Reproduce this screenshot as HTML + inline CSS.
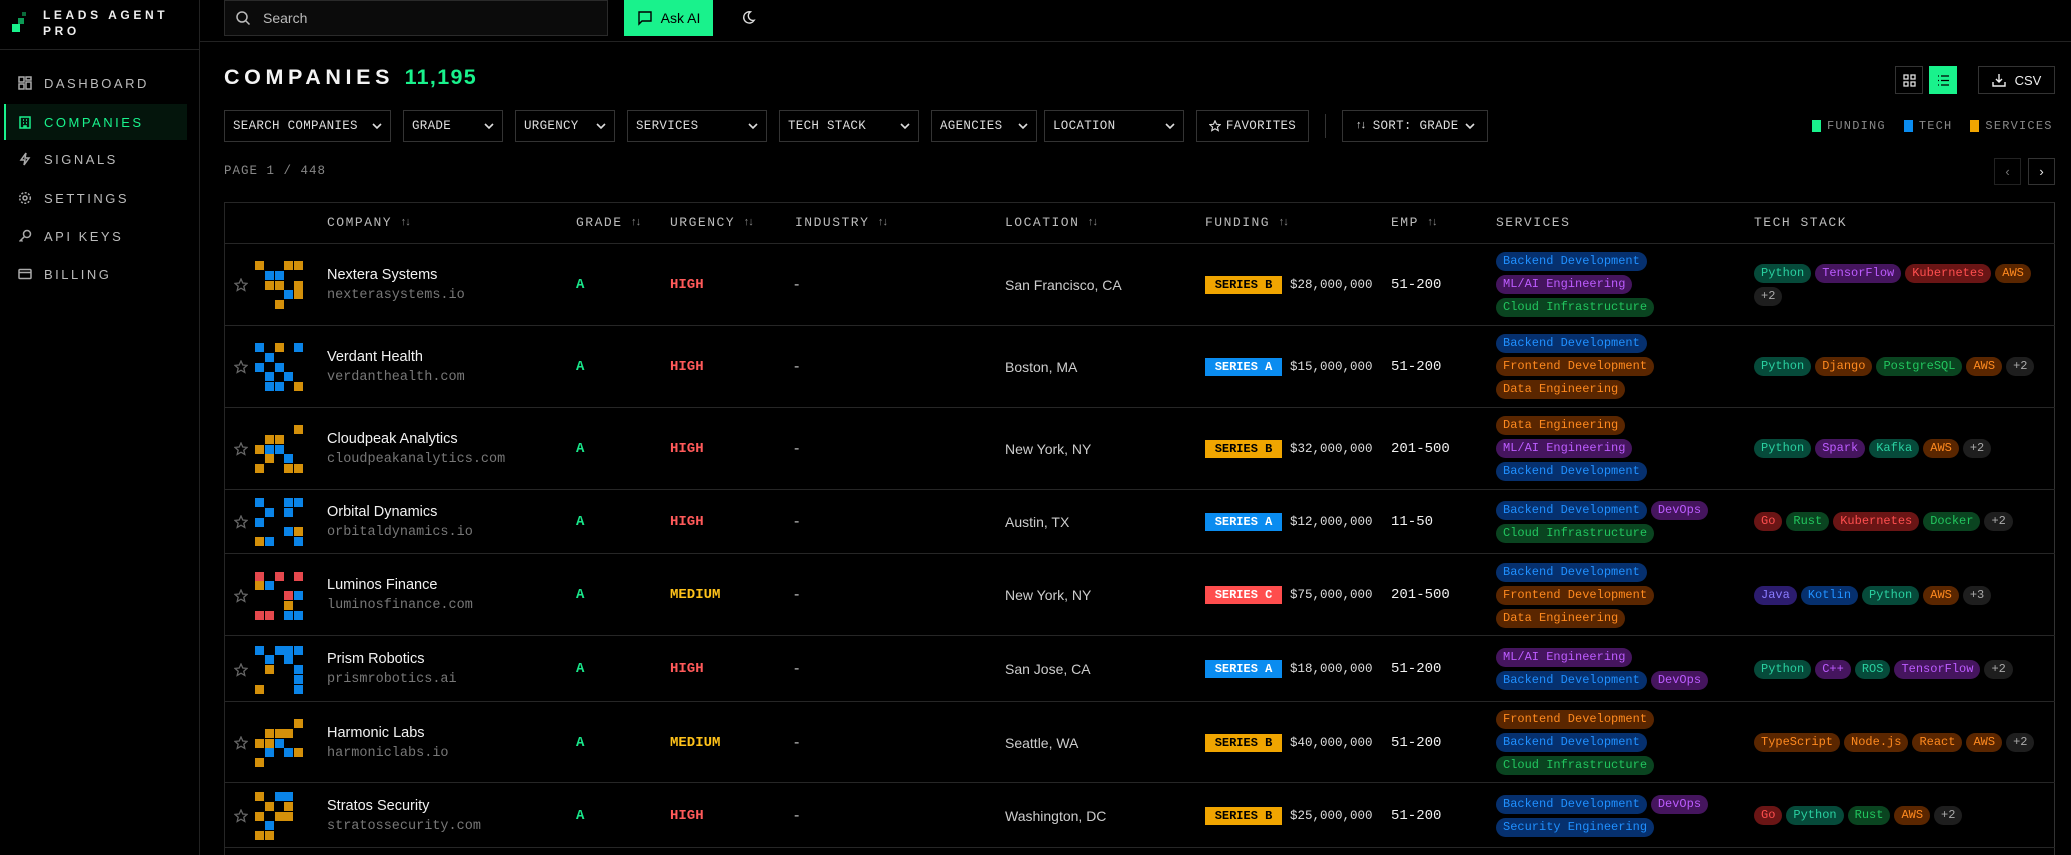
<!DOCTYPE html>
<html><head><meta charset="utf-8"><style>
*{box-sizing:border-box;margin:0;padding:0}
html,body{width:2071px;height:855px;overflow:hidden;background:#000}
body{color:#eee;font-family:"Liberation Sans",sans-serif}
#wrap{position:relative;width:2071px;height:855px;overflow:hidden}
.a{position:absolute}
.mono{font-family:"Liberation Mono",monospace}
.side{left:0;top:0;width:200px;height:855px;border-right:1px solid #222}
.nav{position:absolute;left:4px;width:183px;height:36px;display:flex;align-items:center;padding-left:14px;font-size:13px;letter-spacing:2.5px;color:#bbb}
.nav svg{width:14px;height:14px;margin-right:12px;stroke:#aaa;fill:none;stroke-width:1.5}
.nav.act{background:#04150c;color:#19f28c;border-left:2px solid #19f28c;padding-left:12px}
.nav.act svg{stroke:#19f28c}
.filt{position:absolute;top:110px;height:32px;border:1px solid #333;display:flex;align-items:center;justify-content:space-between;padding:0 8px;font-family:"Liberation Mono",monospace;font-size:12.5px;color:#ddd;letter-spacing:.3px}
.chev{width:10px;height:10px;stroke:#ddd;fill:none;stroke-width:1.6}
.th{position:absolute;top:202px;height:41px;display:flex;align-items:center;font-family:"Liberation Mono",monospace;font-size:13px;letter-spacing:1.5px;color:#bbb}
.th .s{font-size:11px;margin-left:8px;letter-spacing:-2px;color:#888}
.row{position:absolute;left:224px;width:1831px;border-bottom:1px solid #262626}
.c{position:absolute;top:0;height:100%;display:flex;align-items:center}
.logo{position:absolute;left:31px;width:48px;height:48px}
.logo i{position:absolute;width:9px;height:9px}
.nm{font-size:14.5px;color:#f2f2f2}
.dm{font-family:"Liberation Mono",monospace;font-size:13.5px;color:#777;margin-top:5px}
.gr{font-family:"Liberation Mono",monospace;font-weight:bold;font-size:14px;color:#19e68a}
.hi{font-family:"Liberation Mono",monospace;font-weight:bold;font-size:14px;color:#ff5a5a}
.me{font-family:"Liberation Mono",monospace;font-weight:bold;font-size:14px;color:#ffc21a}
.loc{font-size:14px;color:#ccc}
.fb{font-family:"Liberation Mono",monospace;font-weight:bold;font-size:12px;height:18px;line-height:18px;padding:0 6px;width:77px;text-align:center}
.amt{font-family:"Liberation Mono",monospace;font-size:12.5px;color:#ddd;margin-left:8px}
.emp{font-family:"Liberation Mono",monospace;font-size:14px;color:#f0f0f0}
.pills{display:flex;flex-wrap:wrap;gap:4px 4px;align-content:center}
.p{font-family:"Liberation Mono",monospace;font-size:12px;height:19px;line-height:19px;padding:0 7px;border-radius:10px;white-space:nowrap}
.bl{background:#06306e;color:#2090ff}
.or{background:#5a2600;color:#ff8a1f}
.pu{background:#45155e;color:#bd5cff}
.gn{background:#0a4420;color:#22c55e}
.tl{background:#064a3a;color:#2ad0a0}
.rd{background:#6a1515;color:#ff4f4f}
.in{background:#2c1c6e;color:#8a7cff}
.gy{background:#1e1e1e;color:#aaa}
.star{position:absolute;left:10px;width:14px;height:14px;fill:none;stroke:#666;stroke-width:1.3}
</style></head><body><div id="wrap">

<div class="a side">
  <div class="a" style="left:0;top:49px;width:199px;height:1px;background:#222"></div>
  <div class="a" style="left:12px;top:24px;width:8px;height:8px;background:#19f28c"></div>
  <div class="a" style="left:18px;top:18px;width:6px;height:6px;background:#0c9a55"></div>
  <div class="a" style="left:22px;top:12px;width:4px;height:4px;background:#0a6a3a"></div>
  <div class="a" style="left:43px;top:7px;font-size:12px;font-weight:bold;letter-spacing:3.6px;line-height:16px;color:#eee">LEADS AGENT<br>PRO</div>
  <div class="nav" style="top:65px"><svg viewBox="0 0 14 14"><rect x="1" y="1" width="5" height="5"/><rect x="8" y="1" width="5" height="3"/><rect x="1" y="8" width="5" height="5"/><rect x="8" y="6" width="5" height="7"/></svg>DASHBOARD</div>
  <div class="nav act" style="top:104px"><svg viewBox="0 0 14 14"><rect x="2" y="2" width="10" height="11"/><path d="M5 5h1M8 5h1M5 8h1M8 8h1M6 13v-2h2v2"/></svg>COMPANIES</div>
  <div class="nav" style="top:141px"><svg viewBox="0 0 14 14"><path d="M8 1L3 8h4l-1 5 5-7H7z"/></svg>SIGNALS</div>
  <div class="nav" style="top:180px"><svg viewBox="0 0 14 14"><circle cx="7" cy="7" r="2"/><circle cx="7" cy="7" r="5.3" stroke-dasharray="2 1.5"/></svg>SETTINGS</div>
  <div class="nav" style="top:218px"><svg viewBox="0 0 14 14"><circle cx="9" cy="5" r="3.5"/><path d="M6.5 7.5L1.5 12.5M3 11l1.5 1.5"/></svg>API KEYS</div>
  <div class="nav" style="top:256px"><svg viewBox="0 0 14 14"><rect x="1" y="2.5" width="12" height="9" rx="1"/><path d="M1 5.5h12"/></svg>BILLING</div>
</div>

<div class="a" style="left:200px;top:41px;width:1871px;height:1px;background:#222"></div>
<div class="a" style="left:224px;top:0;width:384px;height:36px;border:1px solid #2a2a2a;background:#0b0b0b;display:flex;align-items:center;padding-left:10px;font-size:14px;color:#bbb">
<svg width="16" height="16" viewBox="0 0 16 16" fill="none" stroke="#bbb" stroke-width="1.5" style="margin-right:12px"><circle cx="7" cy="7" r="5"/><path d="M11 11l3.5 3.5"/></svg>Search</div>
<div class="a" style="left:624px;top:0;width:89px;height:36px;background:#19f28c;display:flex;align-items:center;justify-content:center;font-size:14px;color:#000">
<svg width="16" height="16" viewBox="0 0 16 16" fill="none" stroke="#000" stroke-width="1.4" style="margin-right:8px"><path d="M2 2h12v9H5l-3 3z"/></svg>Ask AI</div>
<svg class="a" style="left:741px;top:10px" width="15" height="15" viewBox="0 0 16 16" fill="none" stroke="#ddd" stroke-width="1.5"><path d="M10 2a6 6 0 1 0 4 9A5 5 0 0 1 10 2z"/></svg>

<div class="a" style="left:224px;top:65px;font-size:21.5px;font-weight:bold;letter-spacing:4.6px;color:#f4f4f4">COMPANIES <span style="color:#19f28c;letter-spacing:1.3px">11,195</span></div>

<div class="a" style="left:1895px;top:66px;width:28px;height:28px;border:1px solid #333;display:flex;align-items:center;justify-content:center"><svg width="13" height="13" viewBox="0 0 13 13" fill="none" stroke="#ddd" stroke-width="1.3"><rect x="1" y="1" width="4" height="4"/><rect x="8" y="1" width="4" height="4"/><rect x="1" y="8" width="4" height="4"/><rect x="8" y="8" width="4" height="4"/></svg></div>
<div class="a" style="left:1929px;top:66px;width:28px;height:28px;background:#19f28c;display:flex;align-items:center;justify-content:center"><svg width="13" height="13" viewBox="0 0 13 13" fill="none" stroke="#000" stroke-width="1.3"><path d="M4 2h8M4 6.5h8M4 11h8M1 2h1M1 6.5h1M1 11h1"/></svg></div>
<div class="a" style="left:1978px;top:66px;width:77px;height:28px;border:1px solid #333;display:flex;align-items:center;justify-content:center;font-size:13px;color:#eee"><svg width="14" height="14" viewBox="0 0 14 14" fill="none" stroke="#eee" stroke-width="1.4" style="margin-right:9px"><path d="M7 1v8M4 6l3 3 3-3M1 9v4h12V9"/></svg>CSV</div>

<div class="filt" style="left:224px;width:167px">SEARCH COMPANIES<svg class="chev" viewBox="0 0 10 10"><path d="M1 3l4 4 4-4"/></svg></div>
<div class="filt" style="left:403px;width:100px">GRADE<svg class="chev" viewBox="0 0 10 10"><path d="M1 3l4 4 4-4"/></svg></div>
<div class="filt" style="left:515px;width:100px">URGENCY<svg class="chev" viewBox="0 0 10 10"><path d="M1 3l4 4 4-4"/></svg></div>
<div class="filt" style="left:627px;width:140px">SERVICES<svg class="chev" viewBox="0 0 10 10"><path d="M1 3l4 4 4-4"/></svg></div>
<div class="filt" style="left:779px;width:140px">TECH STACK<svg class="chev" viewBox="0 0 10 10"><path d="M1 3l4 4 4-4"/></svg></div>
<div class="filt" style="left:931px;width:106px">AGENCIES<svg class="chev" viewBox="0 0 10 10"><path d="M1 3l4 4 4-4"/></svg></div>
<div class="filt" style="left:1044px;width:140px">LOCATION<svg class="chev" viewBox="0 0 10 10"><path d="M1 3l4 4 4-4"/></svg></div>
<div class="filt" style="left:1196px;width:113px;justify-content:center"><svg width="12" height="12" viewBox="0 0 14 14" fill="none" stroke="#ddd" stroke-width="1.3" style="margin-right:5px"><path d="M7 1l1.8 4 4.2.4-3.2 2.8 1 4.2L7 10.2 3.2 12.4l1-4.2L1 5.4l4.2-.4z"/></svg>FAVORITES</div>
<div class="a" style="left:1325px;top:114px;width:1px;height:24px;background:#333"></div>
<div class="filt" style="left:1342px;width:146px;justify-content:center"><span style="font-size:11px;letter-spacing:-2px;margin-right:8px">↑↓</span>SORT: GRADE<svg class="chev" viewBox="0 0 10 10" style="margin-left:6px"><path d="M1 3l4 4 4-4"/></svg></div>

<div class="a mono" style="left:1812px;top:119px;font-size:12px;color:#888;display:flex;align-items:center;letter-spacing:1.2px">
<span style="width:9px;height:12px;background:#19f28c;margin-right:6px"></span>FUNDING
<span style="width:9px;height:12px;background:#0a8cf0;margin:0 6px 0 18px"></span>TECH
<span style="width:9px;height:12px;background:#f0a500;margin:0 6px 0 18px"></span>SERVICES</div>

<div class="a mono" style="left:224px;top:164px;font-size:12.5px;color:#888;letter-spacing:1px">PAGE 1 / 448</div>
<div class="a" style="left:1994px;top:158px;width:27px;height:27px;border:1px solid #222;color:#777;text-align:center;line-height:25px;font-size:13px">‹</div>
<div class="a" style="left:2028px;top:158px;width:27px;height:27px;border:1px solid #333;color:#eee;text-align:center;line-height:25px;font-size:13px">›</div>

<div class="a" style="left:224px;top:202px;width:1831px;height:653px;border:1px solid #262626;border-bottom:none;border-right:1px solid #333"></div>
<div class="a" style="left:224px;top:243px;width:1831px;height:1px;background:#262626"></div>
<div class="th" style="left:327px">COMPANY<span class="s">↑↓</span></div>
<div class="th" style="left:576px">GRADE<span class="s">↑↓</span></div>
<div class="th" style="left:670px">URGENCY<span class="s">↑↓</span></div>
<div class="th" style="left:795px">INDUSTRY<span class="s">↑↓</span></div>
<div class="th" style="left:1005px">LOCATION<span class="s">↑↓</span></div>
<div class="th" style="left:1205px">FUNDING<span class="s">↑↓</span></div>
<div class="th" style="left:1391px">EMP<span class="s">↑↓</span></div>
<div class="th" style="left:1496px">SERVICES</div>
<div class="th" style="left:1754px">TECH STACK</div>

<div id="rows"></div>
</div>
<script>
const O='#d4900a',B='#0a84e8',R='#e5484d';
const rows=[
{t:244,h:82,n:'Nextera Systems',d:'nexterasystems.io',u:'hi',U:'HIGH',l:'San Francisco, CA',f:'B',a:'$28,000,000',e:'51-200',
 g:[[0,0,O],[0,3,O],[0,4,O],[1,1,B],[1,2,B],[2,1,O],[2,2,O],[2,4,O],[3,3,B],[3,4,O],[4,2,O]],
 s:[['Backend Development','bl'],['ML/AI Engineering','pu'],['Cloud Infrastructure','gn']],
 k:[['Python','tl'],['TensorFlow','pu'],['Kubernetes','rd'],['AWS','or'],['+2','gy']]},
{t:326,h:82,n:'Verdant Health',d:'verdanthealth.com',u:'hi',U:'HIGH',l:'Boston, MA',f:'A',a:'$15,000,000',e:'51-200',
 g:[[0,0,B],[0,2,O],[0,4,B],[1,1,B],[2,0,B],[2,2,B],[3,1,B],[3,3,B],[4,1,B],[4,2,B],[4,4,O]],
 s:[['Backend Development','bl'],['Frontend Development','or'],['Data Engineering','or']],
 k:[['Python','tl'],['Django','or'],['PostgreSQL','gn'],['AWS','or'],['+2','gy']]},
{t:408,h:82,n:'Cloudpeak Analytics',d:'cloudpeakanalytics.com',u:'hi',U:'HIGH',l:'New York, NY',f:'B',a:'$32,000,000',e:'201-500',
 g:[[0,4,O],[1,1,O],[1,2,O],[2,0,O],[2,1,B],[2,2,B],[3,1,O],[3,3,B],[4,0,O],[4,3,O],[4,4,O]],
 s:[['Data Engineering','or'],['ML/AI Engineering','pu'],['Backend Development','bl']],
 k:[['Python','tl'],['Spark','pu'],['Kafka','tl'],['AWS','or'],['+2','gy']]},
{t:490,h:64,n:'Orbital Dynamics',d:'orbitaldynamics.io',u:'hi',U:'HIGH',l:'Austin, TX',f:'A',a:'$12,000,000',e:'11-50',
 g:[[0,0,B],[0,3,B],[0,4,B],[1,1,B],[1,3,B],[2,0,B],[3,3,B],[3,4,O],[4,0,O],[4,1,B],[4,4,B]],
 s:[['Backend Development','bl'],['DevOps','pu'],['Cloud Infrastructure','gn']],
 k:[['Go','rd'],['Rust','gn'],['Kubernetes','rd'],['Docker','gn'],['+2','gy']]},
{t:555,h:81,n:'Luminos Finance',d:'luminosfinance.com',u:'me',U:'MEDIUM',l:'New York, NY',f:'C',a:'$75,000,000',e:'201-500',
 g:[[0,0,R],[0,2,R],[0,4,R],[1,0,O],[1,1,B],[2,3,R],[2,4,B],[3,3,O],[4,0,R],[4,1,R],[4,3,B],[4,4,B]],
 s:[['Backend Development','bl'],['Frontend Development','or'],['Data Engineering','or']],
 k:[['Java','in'],['Kotlin','bl'],['Python','tl'],['AWS','or'],['+3','gy']]},
{t:637,h:65,n:'Prism Robotics',d:'prismrobotics.ai',u:'hi',U:'HIGH',l:'San Jose, CA',f:'A',a:'$18,000,000',e:'51-200',
 g:[[0,0,B],[0,2,B],[0,3,B],[0,4,B],[1,1,B],[1,3,B],[2,1,O],[2,4,B],[3,4,B],[4,0,O],[4,4,B]],
 s:[['ML/AI Engineering','pu'],['Backend Development','bl'],['DevOps','pu']],
 k:[['Python','tl'],['C++','pu'],['ROS','tl'],['TensorFlow','pu'],['+2','gy']]},
{t:703,h:80,n:'Harmonic Labs',d:'harmoniclabs.io',u:'me',U:'MEDIUM',l:'Seattle, WA',f:'B',a:'$40,000,000',e:'51-200',
 g:[[0,4,O],[1,1,O],[1,2,O],[1,3,O],[2,0,O],[2,1,O],[2,2,B],[3,1,B],[3,3,B],[3,4,O],[4,0,O]],
 s:[['Frontend Development','or'],['Backend Development','bl'],['Cloud Infrastructure','gn']],
 k:[['TypeScript','or'],['Node.js','or'],['React','or'],['AWS','or'],['+2','gy']]},
{t:784,h:64,n:'Stratos Security',d:'stratossecurity.com',u:'hi',U:'HIGH',l:'Washington, DC',f:'B',a:'$25,000,000',e:'51-200',
 g:[[0,0,O],[0,2,B],[0,3,B],[1,1,O],[1,3,O],[2,0,O],[2,2,O],[2,3,O],[3,1,B],[4,0,O],[4,1,O]],
 s:[['Backend Development','bl'],['DevOps','pu'],['Security Engineering','bl']],
 k:[['Go','rd'],['Python','tl'],['Rust','gn'],['AWS','or'],['+2','gy']]}
];
const fc={A:'background:#0a8cf0;color:#fff',B:'background:#f0a500;color:#000',C:'background:#ff4d4d;color:#fff'};
let h='';
for(const r of rows){
 h+=`<div class="row" style="top:${r.t}px;height:${r.h}px">`;
 h+=`<svg class="star" style="top:${r.h/2-7}px" viewBox="0 0 14 14"><path d="M7 1l1.8 4 4.2.4-3.2 2.8 1 4.2L7 10.2 3.2 12.4l1-4.2L1 5.4l4.2-.4z"/></svg>`;
 h+=`<div class="logo" style="top:${r.h/2-24}px">`+r.g.map(([y,x,c])=>`<i style="left:${x*9.8}px;top:${y*9.8}px;background:${c}"></i>`).join('')+`</div>`;
 h+=`<div class="c" style="left:103px;flex-direction:column;align-items:flex-start;justify-content:center"><div class="nm">${r.n}</div><div class="dm">${r.d}</div></div>`;
 h+=`<div class="c gr" style="left:352px">A</div><div class="c ${r.u}" style="left:446px">${r.U}</div>`;
 h+=`<div class="c" style="left:570px;color:#bbb">-</div><div class="c loc" style="left:781px">${r.l}</div>`;
 h+=`<div class="c" style="left:981px"><span class="fb" style="${fc[r.f]}">SERIES ${r.f}</span><span class="amt">${r.a}</span></div>`;
 h+=`<div class="c emp" style="left:1167px">${r.e}</div>`;
 h+=`<div class="c pills" style="left:1272px;width:250px">`+r.s.map(([t,c])=>`<span class="p ${c}">${t}</span>`).join('')+`</div>`;
 h+=`<div class="c pills" style="left:1530px;width:292px">`+r.k.map(([t,c])=>`<span class="p ${c}">${t}</span>`).join('')+`</div>`;
 h+=`</div>`;
}
document.getElementById('rows').innerHTML=h;
</script>
</body></html>
